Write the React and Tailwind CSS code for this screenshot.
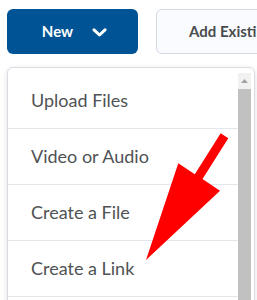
export default function App() {
  const items = ["Upload Files", "Video or Audio", "Create a File", "Create a Link"];
  return (
    <div className="relative w-[257px] h-[300px] overflow-hidden bg-white" style={{ fontFamily: "Lato, 'Open Sans', sans-serif" }}>
      <div className="flex pt-[9px] pl-[7px] gap-[18px]">
        <button className="flex items-center justify-center gap-[19px] w-[131px] h-[45px] shrink-0 rounded-[6px] bg-[#005394] text-white text-[15px] font-bold pl-[4px]">
          <span>New</span>
          <svg width="15" height="9" viewBox="0 0 15 9" className="mt-[1px]">
            <path d="M2 1.8 L7.5 7 L13 1.8" fill="none" stroke="white" strokeWidth="3" strokeLinecap="round" strokeLinejoin="round" />
          </svg>
        </button>
        <button className="flex items-center w-[170px] h-[45px] shrink-0 rounded-[6px] border border-[#d3d9e3] bg-[#f9fbff] text-[#494c4e] text-[15px] font-bold pl-[32px] whitespace-nowrap">
          Add Existing Activities
        </button>
      </div>
      <div className="mt-[13px] ml-[7px] w-[248px] h-[260px] flex rounded-[6px] border border-[#d8dde4] bg-white shadow-[0_2px_6px_rgba(0,0,0,0.12)] overflow-hidden">
        <div className="flex-1 pt-[5px] flex flex-col">
          {items.map((t) => (
            <div key={t} className="h-[56px] shrink-0 flex items-center pl-[23px] border-b border-[#e3e6ea] text-[18px] text-[#4f5254]">
              {t}
            </div>
          ))}
        </div>
        <div className="w-[16px] pt-[5px] pr-[3px] flex flex-col">
          <div className="h-[16px] bg-[#f1f1f1] flex items-center justify-center">
            <svg width="7" height="4" viewBox="0 0 7 4"><path d="M0 4 L3.5 0 L7 4 Z" fill="#a3a3a3" /></svg>
          </div>
          <div className="flex-1 bg-[#c1c1c1]" />
        </div>
      </div>
      <svg className="absolute left-0 top-0 pointer-events-none" width="257" height="300" viewBox="0 0 257 300">
        <polygon points="220.7,133.3 228.3,138.3 202.5,179.1 220,190.7 146,260 178.3,163.3 194.8,174.3" fill="#ff0000" />
      </svg>
    </div>
  );
}
